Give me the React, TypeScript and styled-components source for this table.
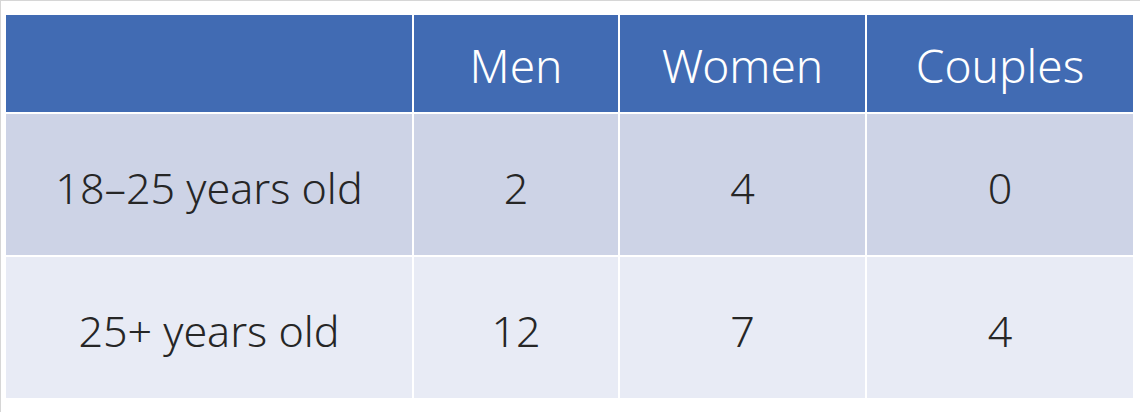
import React from 'react';
import styled, { createGlobalStyle } from 'styled-components';

const GlobalStyle = createGlobalStyle`
  html, body {
    margin: 0;
    padding: 0;
    background: #ffffff;
  }
`;

const Frame = styled.div`
  width: 1140px;
  height: 412px;
  box-sizing: border-box;
  border-top: 1px solid #d6d6d6;
  border-left: 1px solid #d6d6d6;
  padding: 14px 0 0 5px;
  font-family: 'Noto Sans', 'Open Sans', sans-serif;
`;

const Table = styled.div`
  display: grid;
  grid-template-columns: 406px 204px 245px 266px;
  grid-template-rows: 97px 141px 141px;
  gap: 2px;
  width: 1127px;
  background: #ffffff;
`;

type Tone = 'head' | 'dark' | 'light';

const fills: Record<Tone, string> = {
  head: '#416bb3',
  dark: '#cdd3e6',
  light: '#e8ebf5',
};

const Cell = styled.div<{ tone: Tone }>`
  display: flex;
  align-items: center;
  justify-content: center;
  background: ${(props) => fills[props.tone]};
  color: ${(props) => (props.tone === 'head' ? '#ffffff' : '#262626')};
  font-size: ${(props) => (props.tone === 'head' ? '46px' : '43px')};
  font-weight: 300;
  line-height: 1;
  padding-top: ${(props) => (props.tone === 'head' ? '3px' : '5px')};
  box-sizing: border-box;
`;

const headers = ['', 'Men', 'Women', 'Couples'];

const rows = [
  { label: '18–25 years old', values: ['2', '4', '0'], tone: 'dark' as Tone },
  { label: '25+ years old', values: ['12', '7', '4'], tone: 'light' as Tone },
];

const App = () => {
  return (
    <>
      <GlobalStyle />
      <Frame>
        <Table>
          {headers.map((h, i) => (
            <Cell key={'h' + i} tone='head'>
              {h}
            </Cell>
          ))}
          {rows.map((row) => (
            <React.Fragment key={row.label}>
              <Cell tone={row.tone}>{row.label}</Cell>
              {row.values.map((v, i) => (
                <Cell key={i} tone={row.tone}>
                  {v}
                </Cell>
              ))}
            </React.Fragment>
          ))}
        </Table>
      </Frame>
    </>
  );
};

export default App;
